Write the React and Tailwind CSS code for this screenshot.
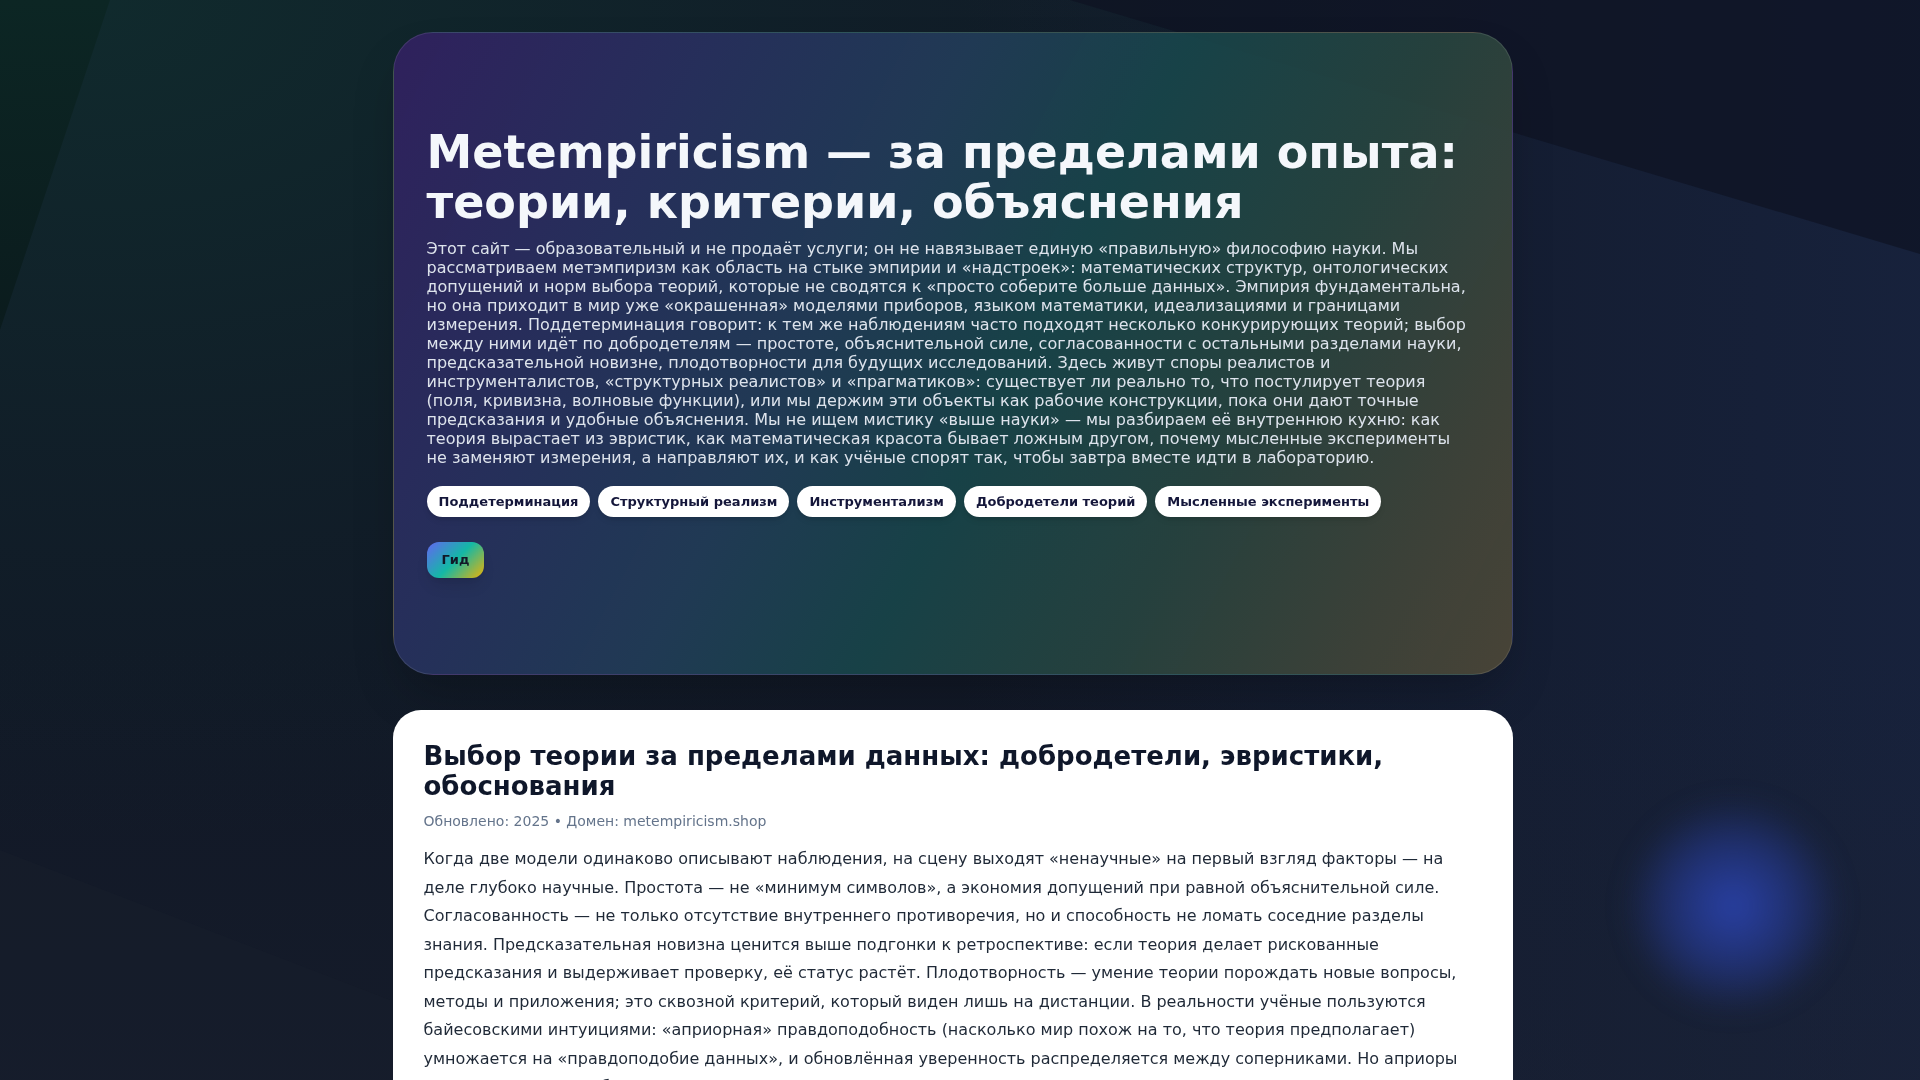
import React from "react";

const tags = [
  "Поддетерминация",
  "Структурный реализм",
  "Инструментализм",
  "Добродетели теорий",
  "Мысленные эксперименты",
];

function Backdrop() {
  return (
    <div className="fixed inset-0 -z-10 overflow-hidden bg-[#111826]">
      <div className="absolute inset-0 bg-[linear-gradient(90deg,transparent_50%,rgba(27,40,74,0.6)_100%)]" />
      <div className="absolute inset-0 bg-[radial-gradient(ellipse_at_5%_0%,rgba(16,50,48,0.7)_0%,rgba(16,50,48,0.25)_30%,transparent_55%)]" />
      <div className="absolute inset-0 bg-[linear-gradient(0deg,rgba(28,34,50,0.35)_0%,transparent_40%)]" />
      {/* left diagonal wedge */}
      <div className="absolute inset-0 bg-[linear-gradient(180deg,#0c2624_0%,#0a1318_55%,#090f14_100%)] [clip-path:polygon(0_0,110px_0,0_330px)]" />
      {/* right diagonal: darker area above the line */}
      <div className="absolute inset-0 bg-[#0e1322]/70 [clip-path:polygon(1070px_0,1920px_0,1920px_254px)]" />
      {/* bottom-left sheet */}
      <div className="absolute inset-0 bg-[#1a2230]/30 [clip-path:polygon(0_850px,390px_1000px,390px_1080px,0_1080px)]" />
      {/* glow orb */}
      <div className="absolute left-[1623px] top-[796px] h-[220px] w-[220px] rounded-full bg-[radial-gradient(circle,rgba(42,66,170,0.95)_0%,rgba(40,62,160,0.55)_38%,transparent_70%)] blur-md" />
    </div>
  );
}

export default function App() {
  return (
    <div className="relative isolate min-h-screen pr-[15px] font-['DejaVu_Sans','Noto_Sans',sans-serif]">
      <Backdrop />
      <main className="mx-auto flex w-[1120px] flex-col gap-[35px] pt-8 pb-16">
        <section className="rounded-[40px] border border-white/10 bg-[linear-gradient(118deg,rgba(49,33,95,0.96)_0%,rgba(40,48,93,0.95)_22%,rgba(33,60,87,0.94)_40%,rgba(24,69,74,0.93)_55%,rgba(39,68,63,0.93)_72%,rgba(61,67,57,0.95)_88%,rgba(75,69,55,0.96)_100%)] pl-[33px] pr-[37px] pt-[94px] pb-24 shadow-2xl">
          <h1 className="text-[46px] font-bold leading-[50px] text-[#f4f7fb]">
            Metempiricism — за пределами опыта: теории, критерии, объяснения
          </h1>
          <p className="mt-3 text-[16px] leading-[19px] text-[#dde3ec]">
            Этот сайт — образовательный и не продаёт услуги; он не навязывает единую «правильную» философию науки. Мы
            рассматриваем метэмпиризм как область на стыке эмпирии и «надстроек»: математических структур, онтологических
            допущений и норм выбора теорий, которые не сводятся к «просто соберите больше данных». Эмпирия фундаментальна,
            но она приходит в мир уже «окрашенная» моделями приборов, языком математики, идеализациями и границами
            измерения. Поддетерминация говорит: к тем же наблюдениям часто подходят несколько конкурирующих теорий; выбор
            между ними идёт по добродетелям — простоте, объяснительной силе, согласованности с остальными разделами науки,
            предсказательной новизне, плодотворности для будущих исследований. Здесь живут споры реалистов и
            инструменталистов, «структурных реалистов» и «прагматиков»: существует ли реально то, что постулирует теория
            (поля, кривизна, волновые функции), или мы держим эти объекты как рабочие конструкции, пока они дают точные
            предсказания и удобные объяснения. Мы не ищем мистику «выше науки» — мы разбираем её внутреннюю кухню: как
            теория вырастает из эвристик, как математическая красота бывает ложным другом, почему мысленные эксперименты
            не заменяют измерения, а направляют их, и как учёные спорят так, чтобы завтра вместе идти в лабораторию.
          </p>
          <div className="mt-[19px] flex flex-wrap gap-2">
            {tags.map((t) => (
              <span
                key={t}
                className="rounded-full bg-white px-3 py-[7px] text-[13px] font-bold leading-[17px] text-[#14163a] shadow-md"
              >
                {t}
              </span>
            ))}
          </div>
          <div className="mt-[25px]">
            <button className="rounded-xl bg-[linear-gradient(135deg,#6366f1_0%,#14b8a6_50%,#eab308_100%)] px-[15px] py-[9px] text-[13px] font-bold leading-[18px] text-[#111827] shadow-lg">
              Гид
            </button>
          </div>
        </section>

        <article className="rounded-[28px] bg-white px-[31px] pt-8 pb-10">
          <h2 className="text-[26px] font-bold leading-[29.5px] text-[#0f172a]">
            Выбор теории за пределами данных: добродетели, эвристики, обоснования
          </h2>
          <div className="mt-[10px] text-[14px] leading-5 text-[#64748b]">
            Обновлено: 2025 • Домен: metempiricism.shop
          </div>
          <p className="mt-[14px] text-[16px] leading-[28.5px] text-[#1f2937]">
            Когда две модели одинаково описывают наблюдения, на сцену выходят «ненаучные» на первый взгляд факторы — на
            деле глубоко научные. Простота — не «минимум символов», а экономия допущений при равной объяснительной силе.
            Согласованность — не только отсутствие внутреннего противоречия, но и способность не ломать соседние разделы
            знания. Предсказательная новизна ценится выше подгонки к ретроспективе: если теория делает рискованные
            предсказания и выдерживает проверку, её статус растёт. Плодотворность — умение теории порождать новые вопросы,
            методы и приложения; это сквозной критерий, который виден лишь на дистанции. В реальности учёные пользуются
            байесовскими интуициями: «априорная» правдоподобность (насколько мир похож на то, что теория предполагает)
            умножается на «правдоподобие данных», и обновлённая уверенность распределяется между соперниками. Но априоры
            тоже не падают с неба: они складываются из опыта прошлых теорий, эстетики и доверия к методам.
          </p>
        </article>
      </main>
    </div>
  );
}
